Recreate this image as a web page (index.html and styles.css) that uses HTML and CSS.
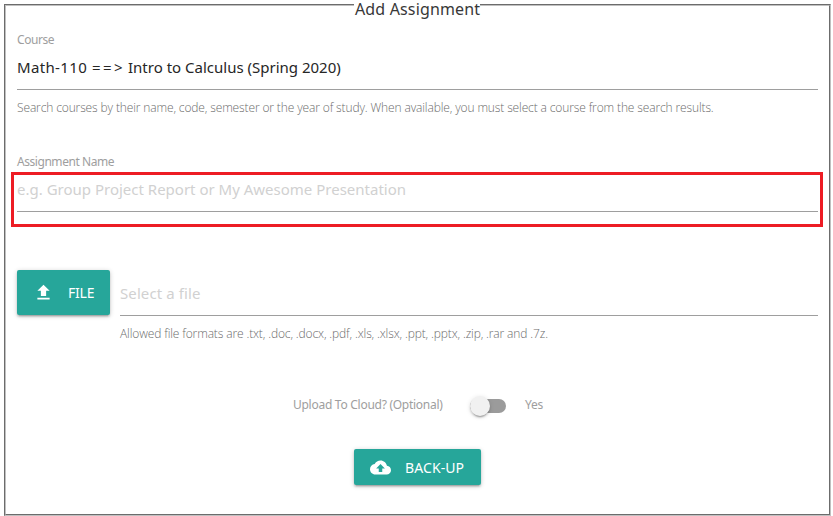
FILE: index.html
```html
<!DOCTYPE html>
<html lang="en">
<head>
<meta charset="utf-8">
<title>Add Assignment</title>
<link rel="stylesheet" href="styles.css">
</head>
<body>
<form class="panel">
  <h1 class="title">Add Assignment</h1>
  <section class="field course">
    <label class="label">Course</label>
    <div class="input value"><span class="code">Math-110</span> <span class="arrow">==&gt;</span> <span>Intro to Calculus (Spring 2020)</span></div>
    <p class="help">Search courses by their name, code, semester or the year of study. When available, you must select a course from the search results.</p>
  </section>
  <section class="field name">
    <label class="label">Assignment Name</label>
    <div class="highlight"><div class="input hint">e.g. Group Project Report or My Awesome Presentation</div></div>
  </section>
  <section class="file-row">
    <button type="button" class="btn file-btn">
      <svg class="upload" viewBox="0 0 24 24"><path d="M9 16h6v-6h4l-7-7-7 7h4zm-4 2h14v2H5z"/></svg><span>FILE</span>
    </button>
    <div class="file-field">
      <div class="input hint">Select a file</div>
      <p class="help formats">Allowed file formats are .txt, .doc, .docx, .pdf, .xls, .xlsx, .ppt, .pptx, .zip, .rar and .7z.</p>
    </div>
  </section>
  <section class="switch-row">
    <span class="switch-label">Upload To Cloud? (Optional)</span>
    <span class="switch"><span class="knob"></span></span>
    <span class="yes">Yes</span>
  </section>
  <button type="button" class="btn backup">
    <svg class="cloud" viewBox="0 0 24 24"><path d="M19.35 10.04C18.67 6.59 15.64 4 12 4 9.11 4 6.6 5.64 5.35 8.04 2.34 8.36 0 10.91 0 14c0 3.31 2.69 6 6 6h13c2.76 0 5-2.24 5-5 0-2.64-2.05-4.78-4.65-4.96zM14 13v4h-4v-4H7l5-5 5 5h-3z"/></svg><span>BACK-UP</span>
  </button>
</form>
</body>
</html>
```
FILE: styles.css
```css
* { box-sizing: border-box; }
body { margin: 0; height: 516px; overflow: hidden; background: #fff; font-family: "Noto Sans", "Open Sans", sans-serif; color: #9e9e9e; }
.panel { position: relative; margin: 4px 2px 0 4px; height: 512px; border: 2px groove #c0c0c0; padding: 26px 11px 0; display: flex; flex-direction: column; }
.title { position: absolute; top: -6px; left: 348px; width: 126px; height: 20px; margin: 0; padding-left: 1px; background: #fff; line-height: 18px; font-size: 16px; font-weight: 400; letter-spacing: .15px; color: #383838; white-space: nowrap; }
.label { display: block; font-size: 12px; line-height: 16px; height: 16px; letter-spacing: -.45px; }
.input { height: 42px; line-height: 38px; font-size: 15px; border-bottom: 1px solid #9e9e9e; color: #d1d1d1; white-space: nowrap; }
.value { display: flex; color: #262626; }
.code { width: 75px; letter-spacing: .35px; }
.arrow { width: 36px; letter-spacing: 2.4px; }
.help { margin: 10px 0 0; font: 300 12px/16px "Open Sans", sans-serif; letter-spacing: -.13px; color: #6c6c6c; white-space: nowrap; }
.course { height: 122px; }
.name { height: 116px; }
.highlight { margin: 2px -5px 0 -6px; height: 55px; border: 3px solid #ed1c24; padding: 0 2px 0 3px; }
.highlight .input { height: 37px; line-height: 28px; }
.file-row { display: flex; gap: 10px; height: 125px; }
.btn { display: flex; align-items: center; border: 0; border-radius: 2px; background: #26a69a; color: #fff; font: 14px "Noto Sans", sans-serif; box-shadow: 0 2px 2px rgba(0,0,0,.14), 0 3px 1px -2px rgba(0,0,0,.12), 0 1px 5px rgba(0,0,0,.2); padding: 0 16px; }
.btn svg { fill: #fff; flex: none; }
.btn span { white-space: nowrap; }
.file-btn { width: 93px; height: 45px; letter-spacing: -.2px; }
.upload { width: 21px; height: 21px; margin-right: 14px; }
.file-field { flex: 1; }
.file-field .input { height: 46px; line-height: 47px; letter-spacing: .1px; }
.switch-row { display: flex; align-items: center; height: 20px; margin-left: 276px; font-size: 12px; letter-spacing: -.27px; }
.switch-label { width: 150px; white-space: nowrap; margin-top: -2px; }
.yes { margin-top: -2px; }
.switch { display: block; width: 36px; height: 14px; margin: 2px 19px 0 27px; border-radius: 7px; background: #9b9b9b; }
.knob { display: block; width: 20px; height: 20px; margin: -3px 0 0; border-radius: 50%; background: #f1f1f1; box-shadow: 0 3px 1px -2px rgba(0,0,0,.2), 0 2px 2px rgba(0,0,0,.14), 0 1px 5px rgba(0,0,0,.12); }
.backup { width: 127px; height: 36px; margin: 34px 0 0 337px; letter-spacing: .1px; }
.cloud { width: 21px; height: 21px; margin-right: 14px; }
```
